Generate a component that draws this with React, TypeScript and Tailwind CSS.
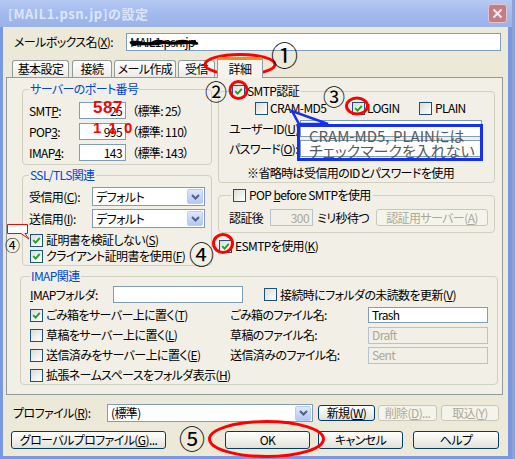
import React from "react";

const F =
  "font-['Noto_Sans_CJK_JP','Noto_Sans_CJK_SC',sans-serif] [font-feature-settings:'palt']";

const Cb = ({ checked = false }: { checked?: boolean }) => (
  <span className="inline-flex w-[13px] h-[13px] shrink-0 items-center justify-center border border-[#1c5180] bg-linear-to-br from-[#dcdcd7] to-white">
    {checked && (
      <svg width="9" height="9" viewBox="0 0 9 9">
        <path d="M1.2 4.2 L3.6 6.6 L7.8 1.8" stroke="#21a121" strokeWidth="1.9" fill="none" />
      </svg>
    )}
  </span>
);

const U = ({ c }: { c: string }) => <span className="underline underline-offset-1">{c}</span>;

const Inp = ({
  w,
  v,
  right,
  dis,
  h = "h-[17px]",
}: {
  w: string;
  v?: React.ReactNode;
  right?: boolean;
  dis?: boolean;
  h?: string;
}) => (
  <div
    className={`${w} ${h} shrink-0 border flex items-center px-[3px] ${right ? "justify-end" : ""} ${
      dis ? "border-[#b4c2d3] text-[#aca899] bg-transparent" : "border-[#7f9db9] bg-white"
    }`}
  >
    {v}
  </div>
);

const Sel = ({ w, v, h }: { w: string; v: React.ReactNode; h: string }) => (
  <div className={`${w} ${h} shrink-0 border border-[#7f9db9] bg-white flex items-center pl-[3px] pr-[1px]`}>
    <span className="flex-1">{v}</span>
    <span className="w-[16px] h-[15px] rounded-[2px] border border-[#bccdf5] bg-linear-to-b from-[#dde8fe] to-[#b3c7f4] flex items-center justify-center">
      <svg width="9" height="6" viewBox="0 0 9 6">
        <path d="M1 1 L4.5 4.5 L8 1" stroke="#4d6185" strokeWidth="2" fill="none" />
      </svg>
    </span>
  </div>
);

const Btn = ({
  w,
  h,
  children,
  dis,
  ml = "",
}: {
  w: string;
  h: string;
  children: React.ReactNode;
  dis?: boolean;
  ml?: string;
}) => (
  <div
    className={`${w} ${h} ${ml} shrink-0 rounded-[3px] border flex items-center justify-center ${
      dis
        ? "border-[#c9c7ba] text-[#aca899] bg-[#f5f4ea]"
        : "border-[#003c74] bg-linear-to-b from-white to-[#e3e1d6]"
    }`}
  >
    {children}
  </div>
);

const Tab = ({ w, children }: { w: string; children: React.ReactNode }) => (
  <div
    className={`${w} h-[17px] shrink-0 border border-b-0 border-[#919b9c] rounded-t-[3px] bg-linear-to-b from-white to-[#ecebe6] flex items-center justify-center`}
  >
    {children}
  </div>
);

export default function App() {
  return (
    <div
      className={`relative w-[515px] h-[459px] overflow-hidden flex bg-[#5d78c8] text-[12px] leading-[14px] tracking-[-0.6px] whitespace-nowrap text-black ${F}`}
    >
      <div className="w-[512px] h-[459px] flex flex-col bg-[#7b97e0]">
        {/* title bar */}
        <div className="h-[27px] shrink-0 flex items-center bg-linear-to-b from-[#b6c9f3] via-[#a4baee] to-[#9ab2ea] pl-[8px] pr-[5px]">
          <span className="text-[13px] font-bold text-[#dbe5f8] tracking-[0.5px]">[MAIL1.psn.jp]の設定</span>
          <div className="ml-auto w-[19px] h-[19px] rounded-[3px] border border-[#e3c4ca] bg-[#c27d88] flex items-center justify-center">
            <svg width="11" height="11" viewBox="0 0 11 11">
              <path d="M1.5 1.5 L9.5 9.5 M9.5 1.5 L1.5 9.5" stroke="#f4e8ea" strokeWidth="2.2" />
            </svg>
          </div>
        </div>

        {/* body */}
        <div className="flex-1 ml-[3px] mr-[4px] mb-[3px] bg-[#ece9d8] flex flex-col">
          {/* mailbox row */}
          <div className="mt-[6px] h-[18px] flex items-center">
            <span className="ml-[11px] w-[112px] shrink-0">
              メールボックス名(<U c="X" />):
            </span>
            <div className="w-[375px] h-[18px] border border-[#7f9db9] bg-white relative flex items-center pl-[3px]">
              <span>MAIL1.psn.jp</span>
              <svg className="absolute left-[1px] top-[3px]" width="72" height="12" viewBox="0 0 72 12">
                <path
                  d="M2 6 C10 2 18 10 26 5 C34 1 40 10 50 5 C58 1 64 9 70 6 M4 8 C14 5 22 9 34 6 C44 4 54 9 68 4"
                  stroke="#000"
                  strokeWidth="2.6"
                  fill="none"
                />
              </svg>
            </div>
          </div>

          {/* tabs */}
          <div className="mt-[5px] h-[21px] flex items-end pl-[9px] gap-[2px]">
            <Tab w="w-[57px]">基本設定</Tab>
            <div className="ml-[1px]">
              <Tab w="w-[40px]">接続</Tab>
            </div>
            <Tab w="w-[62px]">メール作成</Tab>
            <Tab w="w-[37px]">受信</Tab>
            <div className="w-[46px] h-[21px] -mb-px relative z-10 shrink-0 border border-b-0 border-[#919b9c] border-t-[3px] border-t-[#e68b2c] rounded-t-[3px] bg-[#f4f3ec] flex items-center justify-center">
              詳細
            </div>
          </div>

          {/* tab panel */}
          <div className="ml-[3px] mr-[5px] h-[318px] border border-[#919b9c] bg-[#f1efe6] flex flex-col">
            <div className="flex pt-[4px] pl-[15px] items-start">
              {/* left column */}
              <div className="w-[190px] shrink-0 flex flex-col">
                <fieldset className="h-[83px] border border-[#d0d0bf] rounded-[4px] px-[6px]">
                  <legend className="px-[1px] leading-[14px] text-[#0046d5]">サーバーのポート番号</legend>
                  <div className="mt-[6px] flex flex-col gap-[4px]">
                    <div className="h-[17px] flex items-center">
                      <span className="w-[50px]">
                        SMT<U c="P" />:
                      </span>
                      <Inp w="w-[47px]" v="25" right />
                      <span className="ml-[6px]">（標準: 25）</span>
                    </div>
                    <div className="h-[17px] flex items-center">
                      <span className="w-[50px]">
                        POP<U c="3" />:
                      </span>
                      <Inp w="w-[47px]" v="995" right />
                      <span className="ml-[6px]">（標準: 110）</span>
                    </div>
                    <div className="h-[17px] flex items-center">
                      <span className="w-[50px]">
                        IMAP<U c="4" />:
                      </span>
                      <Inp w="w-[47px]" v="143" right />
                      <span className="ml-[6px]">（標準: 143）</span>
                    </div>
                  </div>
                </fieldset>

                <fieldset className="mt-[3px] h-[98px] border border-[#d0d0bf] rounded-[4px] px-[6px]">
                  <legend className="px-[1px] leading-[14px] text-[#0046d5]">SSL/TLS関連</legend>
                  <div className="mt-[5px] flex flex-col gap-[3px]">
                    <div className="flex items-center">
                      <span className="w-[63px]">
                        受信用(<U c="C" />):
                      </span>
                      <Sel w="w-[113px]" h="h-[19px]" v="デフォルト" />
                    </div>
                    <div className="flex items-center">
                      <span className="w-[63px]">
                        送信用(<U c="I" />):
                      </span>
                      <Sel w="w-[113px]" h="h-[19px]" v="デフォルト" />
                    </div>
                  </div>
                  <div className="mt-[4px] flex flex-col">
                    <div className="h-[16px] flex items-center gap-[3px] pl-[1px]">
                      <Cb checked />
                      <span>
                        証明書を検証しない(<U c="S" />)
                      </span>
                    </div>
                    <div className="h-[16px] flex items-center gap-[3px] pl-[1px]">
                      <Cb checked />
                      <span>
                        クライアント証明書を使用(<U c="F" />)
                      </span>
                    </div>
                  </div>
                </fieldset>
              </div>

              {/* right column */}
              <div className="ml-[6px] w-[277px] shrink-0 flex flex-col">
                <fieldset className="mt-[2px] h-[99px] border border-[#d0d0bf] rounded-[4px] pl-[10px] pr-[6px]">
                  <legend className="ml-[1px] px-[2px] leading-[14px] h-[14px] flex items-center gap-[2px]">
                    <Cb checked />
                    <span>SMTP認証</span>
                  </legend>
                  <div className="mt-[3px] h-[14px] flex items-center pl-[26px]">
                    <div className="w-[97px] flex items-center gap-[2px]">
                      <Cb />
                      <span>CRAM-MD5</span>
                    </div>
                    <div className="w-[67px] flex items-center gap-[2px]">
                      <Cb checked />
                      <span>LOGIN</span>
                    </div>
                    <div className="flex items-center gap-[3px]">
                      <Cb />
                      <span>PLAIN</span>
                    </div>
                  </div>
                  <div className="mt-[5px] h-[17px] flex items-center">
                    <span className="w-[71px]">
                      ユーザーID(<U c="U" />)
                    </span>
                    <Inp w="w-[182px]" />
                  </div>
                  <div className="mt-[3px] h-[17px] flex items-center">
                    <span className="w-[71px]">
                      パスワード(<U c="O" />):
                    </span>
                    <Inp w="w-[182px]" />
                  </div>
                  <div className="mt-[9px] pl-[18px]">※省略時は受信用のIDとパスワードを使用</div>
                </fieldset>

                <fieldset className="mt-[5px] h-[45px] border border-[#d0d0bf] rounded-[4px] pl-[10px] pr-[6px]">
                  <legend className="ml-[2px] px-[2px] leading-[14px] h-[14px] flex items-center gap-[3px]">
                    <Cb />
                    <span>
                      POP <U c="b" />
                      efore SMTPを使用
                    </span>
                  </legend>
                  <div className="mt-[7px] h-[17px] flex items-center">
                    <span className="w-[41px]">認証後</span>
                    <Inp w="w-[43px]" v="300" right dis />
                    <span className="ml-[4px]">ミリ秒待つ</span>
                    <Btn w="w-[112px]" h="h-[17px]" dis ml="ml-auto">
                      認証用サーバー(<U c="A" />)
                    </Btn>
                  </div>
                </fieldset>

                <div className="mt-[6px] h-[14px] flex items-center gap-[3px] pl-[1px]">
                  <Cb checked />
                  <span>
                    ESMTPを使用(<U c="K" />)
                  </span>
                </div>
              </div>
            </div>

            {/* IMAP */}
            <fieldset className="mt-[3px] ml-[13px] w-[475px] h-[116px] border border-[#d0d0bf] rounded-[4px] px-[9px]">
              <legend className="px-[1px] leading-[14px] text-[#0046d5]">IMAP関連</legend>
              <div className="mt-[3px] h-[17px] flex items-center">
                <span className="w-[83px]">
                  <U c="I" />
                  MAPフォルダ:
                </span>
                <Inp w="w-[130px]" />
                <div className="ml-[21px] flex items-center gap-[3px]">
                  <Cb />
                  <span>
                    接続時にフォルダの未読数を更新(<U c="V" />)
                  </span>
                </div>
              </div>
              <div className="mt-[4px] flex flex-col gap-[4px]">
                <div className="h-[16px] flex items-center">
                  <div className="w-[200px] flex items-center gap-[3px]">
                    <Cb checked />
                    <span>
                      ごみ箱をサーバー上に置く(<U c="T" />)
                    </span>
                  </div>
                  <span className="w-[138px]">ごみ箱のファイル名:</span>
                  <Inp w="w-[120px]" h="h-[16px]" v="Trash" />
                </div>
                <div className="h-[16px] flex items-center">
                  <div className="w-[200px] flex items-center gap-[3px]">
                    <Cb />
                    <span>
                      草稿をサーバー上に置く(<U c="L" />)
                    </span>
                  </div>
                  <span className="w-[138px]">草稿のファイル名:</span>
                  <Inp w="w-[120px]" h="h-[17px]" v="Draft" dis />
                </div>
                <div className="h-[16px] flex items-center">
                  <div className="w-[200px] flex items-center gap-[3px]">
                    <Cb />
                    <span>
                      送信済みをサーバー上に置く(<U c="E" />)
                    </span>
                  </div>
                  <span className="w-[138px]">送信済みのファイル名:</span>
                  <Inp w="w-[120px]" h="h-[17px]" v="Sent" dis />
                </div>
                <div className="h-[16px] flex items-center">
                  <div className="w-[220px] flex items-center gap-[3px]">
                    <Cb />
                    <span>
                      拡張ネームスペースをフォルダ表示(<U c="H" />)
                    </span>
                  </div>
                </div>
              </div>
            </fieldset>
          </div>

          {/* profile row */}
          <div className="mt-[9px] h-[18px] flex items-center">
            <span className="ml-[10px] w-[94px] shrink-0">
              プロファイル(<U c="R" />):
            </span>
            <Sel w="w-[206px]" h="h-[18px]" v="(標準)" />
            <Btn w="w-[57px]" h="h-[16px]" ml="ml-[5px]">
              新規(<U c="W" />)
            </Btn>
            <Btn w="w-[59px]" h="h-[16px]" ml="ml-[3px]" dis>
              削除(<U c="D" />)...
            </Btn>
            <Btn w="w-[58px]" h="h-[16px]" ml="ml-[4px]" dis>
              取込(<U c="Y" />)
            </Btn>
          </div>

          {/* bottom buttons */}
          <div className="mt-[9px] h-[18px] flex items-center">
            <Btn w="w-[155px]" h="h-[18px]" ml="ml-[8px]">
              グローバルプロファイル(<U c="G" />)...
            </Btn>
            <Btn w="w-[85px]" h="h-[18px]" ml="ml-[59px]">
              OK
            </Btn>
            <Btn w="w-[85px]" h="h-[18px]" ml="ml-[8px]">
              キャンセル
            </Btn>
            <Btn w="w-[86px]" h="h-[18px]" ml="ml-[10px]">
              ヘルプ
            </Btn>
          </div>
        </div>
      </div>
      <div className="flex-1 bg-[#8ea2d6]" />

      {/* ===== annotations (overlays) ===== */}
      <span className="absolute left-[93px] top-[99px] text-[17px] leading-[17px] tracking-[0.5px] font-bold text-[#ff0000] font-['Liberation_Sans',sans-serif]">
        587
      </span>
      <span className="absolute left-[93px] top-[120px] text-[15px] leading-[15px] font-bold text-[#ff0000] tracking-[1.5px] font-['Liberation_Sans',sans-serif]">
        1 1 0
      </span>

      {/* blue callout */}
      <div className="absolute left-[297px] top-[124px] w-[186px] h-[37px] border-[3px] border-[#1630f0] flex flex-col justify-center pl-[9px] text-[15px] leading-[15px] tracking-[0px] text-[#5a5a5a]">
        <span>CRAM-MD5, PLAINには</span>
        <span>チェックマークを入れない</span>
      </div>

      <svg className="absolute left-0 top-0 pointer-events-none" width="515" height="459" viewBox="0 0 515 459">
        {/* blue tail */}
        <polygon points="292,111 299,124 328,124" fill="none" stroke="#1630f0" strokeWidth="2.5" />
        {/* red ellipses */}
        <ellipse cx="240" cy="64.5" rx="35" ry="10" fill="none" stroke="#ff0000" strokeWidth="3" />
        <ellipse cx="238.5" cy="90" rx="8.5" ry="8.5" fill="none" stroke="#ff0000" strokeWidth="3" />
        <ellipse cx="357" cy="106" rx="10.5" ry="8" fill="none" stroke="#ff0000" strokeWidth="3" />
        <ellipse cx="223" cy="243.5" rx="9.5" ry="9" fill="none" stroke="#ff0000" strokeWidth="3" />
        <ellipse cx="266.5" cy="439" rx="57" ry="17.5" fill="none" stroke="#ff0000" strokeWidth="3" />
        {/* small red callout */}
        <path d="M7.5 224.5 H27.5 V233.5 H25 L29 239 L21 233.5 H7.5 Z" fill="#ffffff" stroke="#ff0000" strokeWidth="1" />
      </svg>

      {/* circled numbers */}
      <span className="absolute left-[271px] top-[41px] text-[27px] leading-[27px] tracking-normal [font-feature-settings:normal]">①</span>
      <span className="absolute left-[205px] top-[79px] text-[22px] leading-[22px] tracking-normal [font-feature-settings:normal]">②</span>
      <span className="absolute left-[323px] top-[84px] text-[22px] leading-[22px] tracking-normal [font-feature-settings:normal]">③</span>
      <span className="absolute left-[189px] top-[241px] text-[25px] leading-[25px] tracking-normal [font-feature-settings:normal]">④</span>
      <span className="absolute left-[5px] top-[237px] text-[15px] leading-[15px] tracking-normal [font-feature-settings:normal]">④</span>
      <span className="absolute left-[179px] top-[425px] text-[26px] leading-[26px] tracking-normal [font-feature-settings:normal]">⑤</span>
    </div>
  );
}
